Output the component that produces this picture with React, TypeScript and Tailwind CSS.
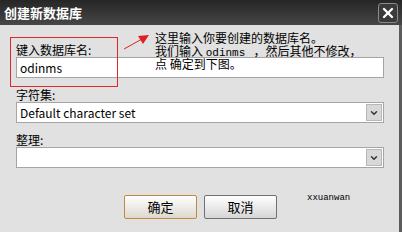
import { X, ChevronDown } from 'lucide-react'

const cjk = { fontFamily: '"Noto Sans CJK SC", "Liberation Sans", sans-serif' }

function Select({ value }: { value?: string }) {
  return (
    <div className="flex h-[21px] w-[368px] border border-[#a5a5a5] bg-white">
      <div className="flex-1 pl-[3px] text-[12px] leading-[19px] text-black" style={cjk}>
        {value}
      </div>
      <div className="m-px flex w-[16px] items-center justify-center border border-[#b8b8b8] bg-[#d8d8d8]">
        <ChevronDown className="h-[10px] w-[10px] text-[#333]" strokeWidth={3.5} />
      </div>
    </div>
  )
}

export default function App() {
  return (
    <div className="relative flex h-[232px] w-[402px] flex-col overflow-hidden bg-[#e1e1e1]" style={cjk}>
      <div className="flex h-[25px] items-center justify-between bg-gradient-to-b from-[#262626] to-[#474747] pl-[4px] pr-[4px]">
        <span className="text-[13px] font-bold text-white">创建新数据库</span>
        <div className="flex h-[20px] w-[20px] items-center justify-center rounded-[3px] border border-[#8a8a8a] bg-[#3a3a3a]">
          <X className="h-[16px] w-[16px] text-white" strokeWidth={3.5} />
        </div>
      </div>

      <div className="flex flex-1 border-r-[3px] border-[#5c5c5c]">
        <div className="flex flex-col pl-[16px] pt-[17px]">
          <div className="h-[15px] text-[12px] leading-[15px] text-black">键入数据库名:</div>
          <div className="h-[21px] w-[368px] border border-[#a5a5a5] bg-white pl-[3px] text-[12px] leading-[19px] text-black">
            odinms
          </div>
          <div className="mt-[9px] h-[15px] text-[12px] leading-[15px] text-black">字符集:</div>
          <Select value="Default character set" />
          <div className="mt-[9px] h-[15px] text-[12px] leading-[15px] text-black">整理:</div>
          <Select />
          <div className="mt-[27px] flex items-start gap-[7px] pl-[108px]">
            <button className="h-[24px] w-[73px] rounded-[2px] border border-[#c08a40] bg-gradient-to-b from-[#ffffff] to-[#ddd8cf] text-[13px] text-black">
              确定
            </button>
            <button className="h-[24px] w-[73px] rounded-[2px] border border-[#707070] bg-gradient-to-b from-[#ffffff] to-[#d6d6d6] text-[13px] text-black">
              取消
            </button>
            <span className="ml-[23px] -mt-[2px] text-[9px] leading-[10px] text-black" style={{ fontFamily: '"Liberation Mono", monospace' }}>
              xxuanwan
            </span>
          </div>
        </div>
      </div>

      <div className="absolute left-[10px] top-[37px] h-[50px] w-[108px] border border-[#e02828]" />
      <svg className="absolute left-[122px] top-[32px]" width="30" height="20" viewBox="0 0 30 20">
        <line x1="2" y1="17" x2="20" y2="7" stroke="#e02020" strokeWidth="1" />
        <polygon points="27,3 16,4 21,12" fill="#e02020" />
      </svg>
      <div className="absolute left-[155px] top-[31px] text-[12px] leading-[13px] text-black">
        <div className="h-[13px]">这里输入你要创建的数据库名。</div>
        <div className="h-[13px] whitespace-pre">
          我们输入 <span className="text-[11px]" style={{ fontFamily: '"Liberation Mono", monospace' }}>odinms</span>
          {'   '}，然后其他不修改，
        </div>
        <div className="h-[13px]">点 确定到下图。</div>
      </div>
    </div>
  )
}
